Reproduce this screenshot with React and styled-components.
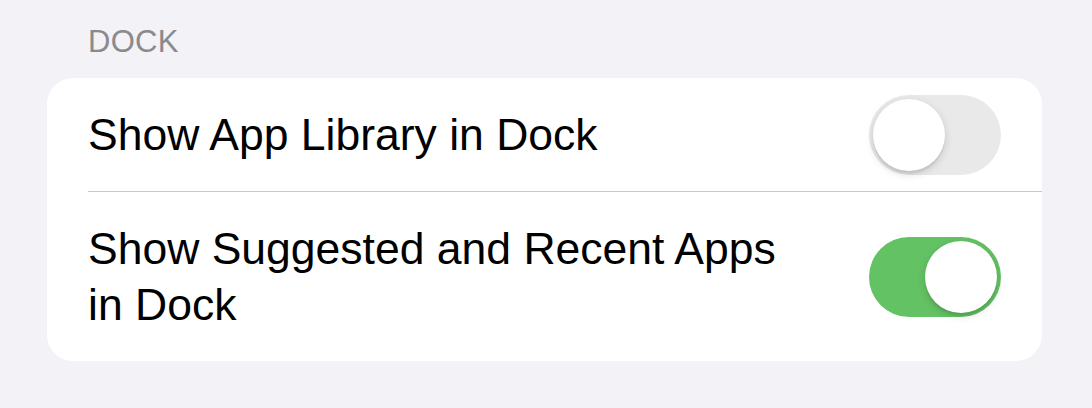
import React from 'react';
import styled, { createGlobalStyle } from 'styled-components';

const GlobalStyle = createGlobalStyle`
  html, body {
    margin: 0;
    padding: 0;
    background: #f2f2f7;
  }
  body {
    font-family: "Liberation Sans", Arial, sans-serif;
    -webkit-font-smoothing: antialiased;
  }
`;

const Page = styled.div`
  width: 995px;
  padding: 23px 0 0 47px;
`;

const SectionHeader = styled.div`
  padding-left: 41px;
  margin-bottom: 18px;
  font-size: 31px;
  line-height: 37px;
  color: #8a8a8e;
  text-transform: uppercase;
  letter-spacing: 0.3px;
`;

const Card = styled.div`
  background: #ffffff;
  border-radius: 26px;
  overflow: hidden;
`;

const Row = styled.div`
  position: relative;
  display: flex;
  align-items: center;
  justify-content: space-between;
  min-height: 113px;
  padding: 0 41px;
  box-sizing: border-box;

  & + & {
    border-top: 1px solid transparent;
  }

  & + &::before {
    content: "";
    position: absolute;
    top: -1px;
    left: 41px;
    right: 0;
    height: 1px;
    background: #c8c7cc;
  }
`;

const Label = styled.div`
  max-width: 710px;
  padding: 29px 0 28px;
  font-size: 44.5px;
  line-height: 56px;
  color: #000;
`;

const Switch = styled.button`
  position: relative;
  flex: none;
  width: 132px;
  height: 80px;
  padding: 0;
  border: none;
  border-radius: 40px;
  background: ${p => (p.$on ? '#63c264' : '#e9e9ea')};
  cursor: pointer;

  &::after {
    content: "";
    position: absolute;
    top: 4px;
    left: ${p => (p.$on ? '56px' : '4px')};
    width: 72px;
    height: 72px;
    border-radius: 50%;
    background: #fff;
    box-shadow: 0 3px 8px rgba(0, 0, 0, 0.15), 0 3px 1px rgba(0, 0, 0, 0.06);
  }
`;

const settings = [
  { label: 'Show App Library in Dock', on: false },
  { label: 'Show Suggested and Recent Apps in Dock', on: true },
];

export default function App() {
  return (
    <>
      <GlobalStyle />
      <Page>
        <SectionHeader>Dock</SectionHeader>
        <Card>
          {settings.map(s => (
            <Row key={s.label}>
              <Label>{s.label}</Label>
              <Switch $on={s.on} aria-pressed={s.on} />
            </Row>
          ))}
        </Card>
      </Page>
    </>
  );
}
